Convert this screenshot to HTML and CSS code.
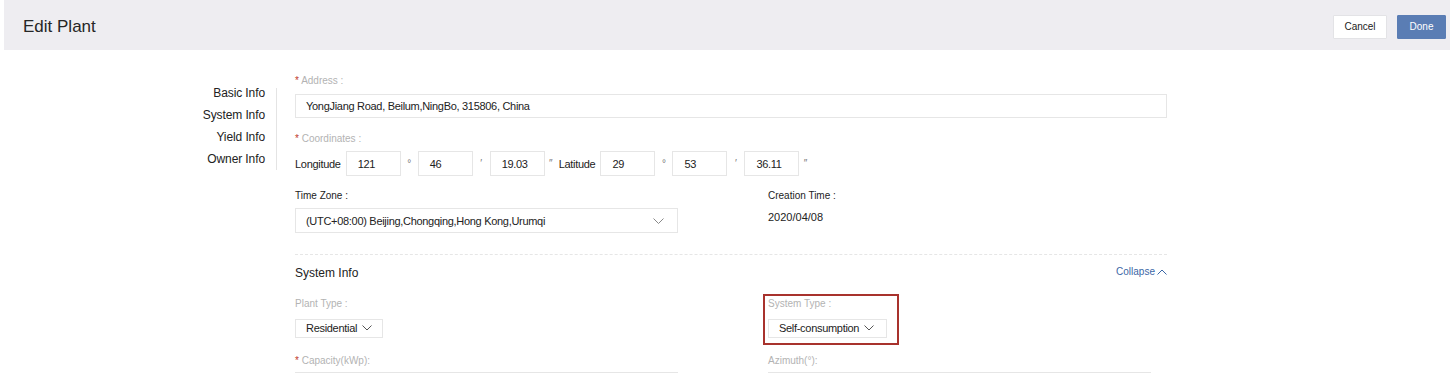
FILE: index.html
```html
<!DOCTYPE html>
<html lang="en">
<head>
    <meta charset="UTF-8">
    <meta name="viewport" content="width=device-width, initial-scale=1.0">
    <title>Edit Plant</title>
    <link rel="stylesheet" href="styles.css">
</head>
<body>

    <div class="page">
        <div class="header">
            <h1 class="page-title">Edit Plant</h1>
            <div class="header-actions">
                <button type="button" class="btn btn-cancel">Cancel</button>
                <button type="button" class="btn btn-done">Done</button>
            </div>
        </div>

        <div class="content">
            <ul class="side-nav">
                <li>Basic Info</li>
                <li>System Info</li>
                <li>Yield Info</li>
                <li>Owner Info</li>
            </ul>

            <div class="form">
                <div class="field field-address">
                    <label class="label"><span class="req">*</span> Address :</label>
                    <div class="input input-full">YongJiang Road, Beilum,NingBo, 315806, China</div>
                </div>

                <div class="field field-coords">
                    <label class="label"><span class="req">*</span> Coordinates :</label>
                    <div class="coord-row">
                        <span class="coord-name">Longitude</span>
                        <div class="input input-coord">121</div>
                        <span class="unit">°</span>
                        <div class="input input-coord">46</div>
                        <span class="unit">′</span>
                        <div class="input input-coord">19.03</div>
                        <span class="unit unit-end">″</span>
                        <span class="coord-name">Latitude</span>
                        <div class="input input-coord">29</div>
                        <span class="unit">°</span>
                        <div class="input input-coord">53</div>
                        <span class="unit">′</span>
                        <div class="input input-coord">36.11</div>
                        <span class="unit unit-end">″</span>
                    </div>
                </div>

                <div class="grid">
                    <div class="field">
                        <label class="label label-dark">Time Zone :</label>
                        <div class="input select-wide">
                            <span>(UTC+08:00) Beijing,Chongqing,Hong Kong,Urumqi</span>
                            <svg class="chevron" width="11" height="6" viewBox="0 0 11 6"><path d="M0.5 0.5 L5.5 5.5 L10.5 0.5" fill="none" stroke="#888" stroke-width="1"/></svg>
                        </div>
                    </div>
                    <div class="field">
                        <label class="label label-dark">Creation Time :</label>
                        <div class="plain-value">2020/04/08</div>
                    </div>
                </div>

                <div class="section-head">
                    <span class="section-title">System Info</span>
                    <a class="collapse">Collapse
                        <svg width="10" height="6" viewBox="0 0 10 6"><path d="M0.5 5.5 L5 1 L9.5 5.5" fill="none" stroke="#3b67a6" stroke-width="1"/></svg>
                    </a>
                </div>

                <div class="grid">
                    <div class="field field-select">
                        <label class="label">Plant Type :</label>
                        <div class="input select-small">Residential
                            <svg width="10" height="6" viewBox="0 0 10 6"><path d="M0.5 0.5 L5 5 L9.5 0.5" fill="none" stroke="#555" stroke-width="1"/></svg>
                        </div>
                    </div>
                    <div class="field field-select">
                        <div class="highlight">
                            <label class="label">System Type :</label>
                            <div class="input select-small">Self-consumption
                                <svg width="10" height="6" viewBox="0 0 10 6"><path d="M0.5 0.5 L5 5 L9.5 0.5" fill="none" stroke="#555" stroke-width="1"/></svg>
                            </div>
                        </div>
                    </div>
                    <div class="field field-bottom">
                        <label class="label"><span class="req">*</span> Capacity(kWp):</label>
                        <div class="input input-half"></div>
                    </div>
                    <div class="field field-bottom">
                        <label class="label">Azimuth(°):</label>
                        <div class="input input-half"></div>
                    </div>
                </div>
            </div>
        </div>
    </div>

</body>
</html>
```

FILE: styles.css
```css
body {
    font-family: "Liberation Sans", Arial, sans-serif;
    background-color: white;
    color: #222;
    margin: 0;
    height: 373px;
    overflow: hidden;
}
.page {
    margin: 0 4px;
}
.header {
    height: 50px;
    box-sizing: border-box;
    background-color: #eeedf1;
    display: flex;
    align-items: center;
    justify-content: space-between;
    padding: 3px 4px 0 19px;
}
.page-title {
    font-size: 17px;
    font-weight: normal;
    color: #262626;
    margin: 0;
}
.header-actions {
    display: flex;
    gap: 10px;
}
.btn {
    height: 24px;
    font-family: inherit;
    font-size: 10px;
    border-radius: 1px;
    cursor: pointer;
}
.btn-cancel {
    width: 54px;
    background: white;
    border: 1px solid #e3e3e6;
    color: #222;
}
.btn-done {
    width: 49px;
    background-color: #5a7db4;
    border: 1px solid #5a7db4;
    color: white;
}
.content {
    display: flex;
}
.side-nav {
    list-style: none;
    margin: 38px 0 0 0;
    padding: 0 11px 0 0;
    width: 261px;
    height: 82px;
    border-right: 1px solid #e4e4e4;
    text-align: right;
    font-size: 12px;
    color: #222;
}
.side-nav li {
    height: 22px;
    line-height: 10px;
    letter-spacing: -0.1px;
}
.form {
    width: 872px;
    margin-left: 18px;
    padding-top: 24px;
}
.field {
    margin-bottom: 13px;
}
.field-address {
    margin-bottom: 14px;
}
.label {
    display: block;
    font-size: 10px;
    line-height: 14px;
    color: #b3b3b3;
    margin-bottom: 5px;
}
.field-address .label {
    margin-bottom: 6px;
}
.label-dark {
    color: #222;
}
.req {
    color: #c0392b;
}
.input {
    box-sizing: border-box;
    border: 1px solid #e6e6e6;
    background: white;
    font-size: 11px;
    letter-spacing: -0.3px;
    color: #222;
    display: flex;
    align-items: center;
}
.input-full {
    width: 872px;
    height: 24px;
    padding-left: 10px;
}
.coord-row {
    display: flex;
    align-items: center;
    font-size: 11px;
    letter-spacing: -0.3px;
}
.coord-name {
    margin-right: 5px;
}
.input-coord {
    width: 55px;
    height: 25px;
    padding-left: 11px;
}
.unit {
    width: 17px;
    text-align: center;
    color: #777;
    font-size: 10px;
}
.unit-end {
    width: 12px;
    margin-right: 2px;
}
.grid {
    display: grid;
    grid-template-columns: 383px 1fr;
    column-gap: 90px;
}
.select-wide {
    width: 383px;
    height: 25px;
    padding: 0 13px 0 10px;
    justify-content: space-between;
}
.plain-value {
    font-size: 11px;
    line-height: 14px;
    margin-top: 7px;
}
.section-head {
    display: flex;
    justify-content: space-between;
    align-items: center;
    border-top: 1px dashed #e6e6e6;
    padding-top: 10px;
    margin-top: 8px;
    margin-bottom: 16px;
}
.section-title {
    font-size: 12px;
    line-height: 16px;
}
.collapse {
    font-size: 10px;
    color: #3b67a6;
    display: flex;
    align-items: center;
    gap: 2px;
    margin-top: -3px;
}
.field-select {
    margin-bottom: 16px;
}
.field-select .label {
    margin-bottom: 7px;
}
.field-bottom .label {
    margin-bottom: 4px;
}
.select-small {
    display: inline-flex;
    height: 19px;
    padding: 0 10px 0 10px;
    gap: 5px;
}
.highlight {
    position: relative;
    display: inline-block;
}
.highlight .select-small {
    padding-right: 12px;
}
.highlight::after {
    content: "";
    position: absolute;
    top: -3px;
    left: -5px;
    right: -12px;
    bottom: -7px;
    border: 2px solid #a8322d;
}
.input-half {
    height: 25px;
    width: 383px;
    background: #fafafa;
}
```
